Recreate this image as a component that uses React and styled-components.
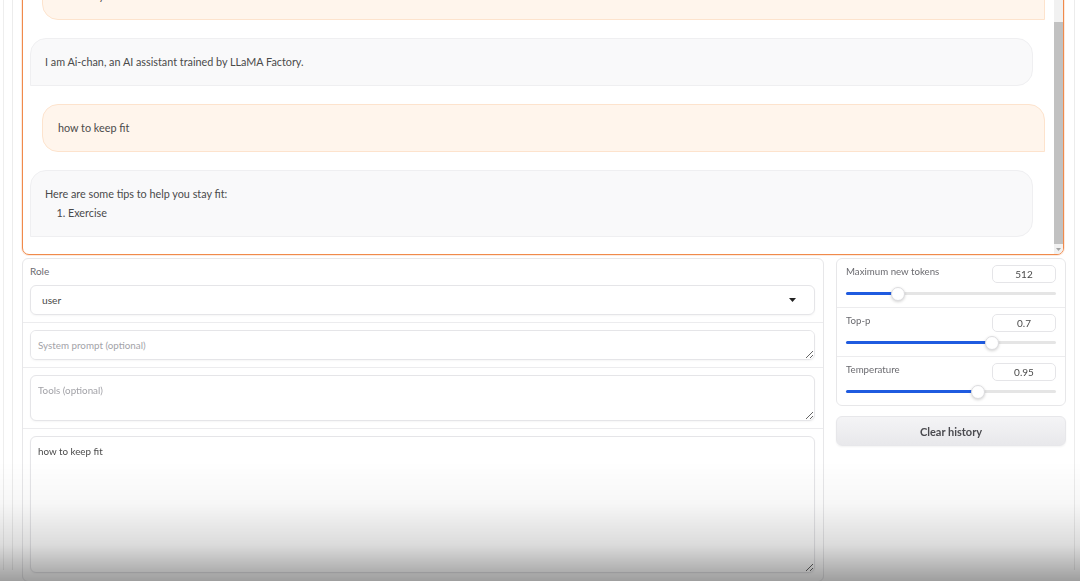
import React from 'react';
import styled, { createGlobalStyle } from 'styled-components';

const GlobalStyle = createGlobalStyle`
    html, body {
        margin: 0;
        padding: 0;
        background: #ffffff;
        font-family: Lato, "Liberation Sans", sans-serif;
        color: #4a4a4a;
    }
    * { box-sizing: border-box; }
`;

const Page = styled.div`
    height: 581px;
    overflow: hidden;
    padding-left: 3px;
`;

const OuterFrame = styled.div`
    height: 100%;
    border-left: 1px solid #eeeeee;
    padding-left: 8px;
`;

const InnerFrame = styled.div`
    width: 1063px;
    height: 100%;
    border-left: 1px solid #ececec;
    border-right: 1px solid #ececec;
    padding: 0 8px 0 9px;
`;

const ChatBox = styled.div`
    height: 266px;
    margin: -11px 2px 0 0;
    display: flex;
    border: 1px solid #f08a4b;
    border-radius: 7px;
    box-shadow: 0 0 0 1px rgba(240, 138, 75, 0.18);
    overflow: hidden;
    background: #fff;
`;

const Scroller = styled.div`
    flex: 1;
    display: flex;
    flex-direction: column-reverse;
    overflow: hidden;
`;

const ScrollRail = styled.div`
    width: 9px;
    display: flex;
    flex-direction: column;
    background: #f1f1f1;
`;

const RailSpace = styled.div`
    flex: 1;
`;

const RailThumb = styled.div`
    height: 222px;
    background: #c1c1c1;
`;

const RailButton = styled.div`
    height: 10px;
    display: flex;
    align-items: center;
    justify-content: center;
`;

const MessageList = styled.div`
    display: flex;
    flex-direction: column;
    gap: 18px;
    padding: 24px 9px 17px 7px;
`;

const Bubble = styled.div`
    width: calc(100% - 12px);
    align-self: ${({ $role }) => $role === 'user' ? 'flex-end' : 'flex-start'};
    padding: 15px ${({ $role }) => $role === 'user' ? '15px' : '14px'};
    font-size: 10.8px;
    line-height: 16px;
    color: #4a4a4a;
    background: ${({ $role }) => $role === 'user' ? '#fff5ec' : '#f9f9fa'};
    border: 1px solid ${({ $role }) => $role === 'user' ? '#fde3cd' : '#efeff1'};
    border-radius: ${({ $role }) => $role === 'user' ? '16px 16px 0 16px' : '16px 16px 16px 0'};
`;

const List = styled.ol`
    margin: 3px 0 0;
    padding-left: 23px;
`;

const BottomRow = styled.div`
    display: flex;
    gap: 12px;
    margin-top: 3px;
`;

const FormPanel = styled.div`
    width: 802px;
    border: 1px solid #e7e7e9;
    border-radius: 6px;
`;

const Field = styled.div`
    padding: ${({ $first }) => $first ? '6px' : '7px'} 8px 7px 7px;
    border-bottom: 1px solid ${({ $last }) => $last ? 'transparent' : '#ececee'};
`;

const FieldLabel = styled.div`
    font-size: 10px;
    line-height: 12px;
    color: #6b6b70;
    margin-bottom: 8px;
`;

const Select = styled.div`
    height: 30px;
    display: flex;
    align-items: center;
    justify-content: space-between;
    padding: 0 18px 0 11px;
    font-size: 10.2px;
    color: #4a4a4a;
    border: 1px solid #e5e5e8;
    border-radius: 6px;
    box-shadow: 0 1px 2px rgba(0, 0, 0, 0.04);
`;

const TextArea = styled.textarea`
    display: block;
    width: 100%;
    height: ${({ $h }) => $h}px;
    resize: vertical;
    padding: 7px 7px;
    font-family: Lato, "Liberation Sans", sans-serif;
    font-size: 9.8px;
    line-height: 15px;
    color: #4a4a4a;
    border: 1px solid #e5e5e8;
    border-radius: 6px;
    box-shadow: 0 1px 2px rgba(0, 0, 0, 0.04);
    outline: none;
    &::placeholder { color: #a3a3a8; }
`;

const SideColumn = styled.div`
    flex: 1;
    display: flex;
    flex-direction: column;
    gap: 10px;
`;

const SliderPanel = styled.div`
    border: 1px solid #e7e7e9;
    border-radius: 6px;
`;

const SliderRow = styled.div`
    height: ${({ $last }) => $last ? '48px' : '49px'};
    padding: 6px 9px 0;
    border-bottom: 1px solid ${({ $last }) => $last ? 'transparent' : '#ececee'};
`;

const SliderHead = styled.div`
    display: flex;
    justify-content: space-between;
    align-items: flex-start;
`;

const SliderLabel = styled.span`
    font-size: 9.7px;
    line-height: 12px;
    color: #6b6b70;
`;

const NumberBox = styled.div`
    width: 64px;
    height: 18px;
    display: flex;
    align-items: center;
    justify-content: center;
    font-size: 10px;
    color: #4a4a4a;
    border: 1px solid #e5e5e8;
    border-radius: 5px;
`;

const Track = styled.div`
    position: relative;
    height: 3px;
    margin-top: 9px;
    border-radius: 2px;
    background: #e5e5e5;
`;

const Fill = styled.div`
    height: 100%;
    border-radius: 2px;
    background: #1f5be0;
`;

const Thumb = styled.div`
    position: absolute;
    top: 50%;
    width: 14px;
    height: 14px;
    border-radius: 50%;
    background: #fff;
    border: 1px solid #dcdcdf;
    box-shadow: 0 1px 3px rgba(0, 0, 0, 0.18);
    transform: translate(-50%, -50%);
`;

const ClearButton = styled.button`
    height: 30px;
    border: 1px solid #e7e7ea;
    border-radius: 6px;
    background: linear-gradient(#f4f4f6, #e8e8eb);
    font-family: Lato, "Liberation Sans", sans-serif;
    font-weight: 700;
    font-size: 11px;
    color: #4a4a4f;
    box-shadow: 0 1px 2px rgba(0, 0, 0, 0.05);
`;

const Vignette = styled.div`
    position: fixed;
    left: 0;
    right: 0;
    bottom: 0;
    height: 120px;
    pointer-events: none;
    background: linear-gradient(to bottom, rgba(0,0,0,0) 0%, rgba(0,0,0,0.03) 35%, rgba(0,0,0,0.14) 70%, rgba(0,0,0,0.38) 100%);
`;

const Caret = () => (
    <svg width="7" height="4" viewBox="0 0 7 4">
        <path d="M0 0h7L3.5 4z" fill="#222" />
    </svg>
);

const ArrowDown = () => (
    <svg width="5" height="3" viewBox="0 0 5 3">
        <path d="M0 0h5L2.5 3z" fill="#a3a3a3" />
    </svg>
);

const sliders = [
    { label: 'Maximum new tokens', value: 512, min: 8, max: 2048 },
    { label: 'Top-p', value: 0.7, min: 0.01, max: 1 },
    { label: 'Temperature', value: 0.95, min: 0.01, max: 1.5 },
];

const Slider = ({ label, value, min, max, last }) => {
    const pct = ((value - min) / (max - min)) * 100;
    return (
        <SliderRow $last={last}>
            <SliderHead>
                <SliderLabel>{label}</SliderLabel>
                <NumberBox>{value}</NumberBox>
            </SliderHead>
            <Track>
                <Fill style={{ width: `${pct}%` }} />
                <Thumb style={{ left: `${pct}%` }} />
            </Track>
        </SliderRow>
    );
};

export default function App() {
    return (
        <Page>
            <GlobalStyle />
            <OuterFrame>
                <InnerFrame>
                    <ChatBox>
                        <Scroller>
                            <MessageList>
                                <Bubble $role="user">who are you</Bubble>
                                <Bubble $role="bot">I am Ai-chan, an AI assistant trained by LLaMA Factory.</Bubble>
                                <Bubble $role="user">how to keep fit</Bubble>
                                <Bubble $role="bot">
                                    Here are some tips to help you stay fit:
                                    <List><li>Exercise</li></List>
                                </Bubble>
                            </MessageList>
                        </Scroller>
                        <ScrollRail>
                            <RailSpace />
                            <RailThumb />
                            <RailButton><ArrowDown /></RailButton>
                        </ScrollRail>
                    </ChatBox>
                    <BottomRow>
                        <FormPanel>
                            <Field $first>
                                <FieldLabel>Role</FieldLabel>
                                <Select>
                                    <span>user</span>
                                    <Caret />
                                </Select>
                            </Field>
                            <Field>
                                <TextArea $h={30} placeholder="System prompt (optional)" />
                            </Field>
                            <Field>
                                <TextArea $h={46} placeholder="Tools (optional)" />
                            </Field>
                            <Field $last>
                                <TextArea $h={137} defaultValue="how to keep fit" />
                            </Field>
                        </FormPanel>
                        <SideColumn>
                            <SliderPanel>
                                {sliders.map((s, i) => (
                                    <Slider key={s.label} {...s} last={i === sliders.length - 1} />
                                ))}
                            </SliderPanel>
                            <ClearButton>Clear history</ClearButton>
                        </SideColumn>
                    </BottomRow>
                </InnerFrame>
            </OuterFrame>
            <Vignette />
        </Page>
    );
}
